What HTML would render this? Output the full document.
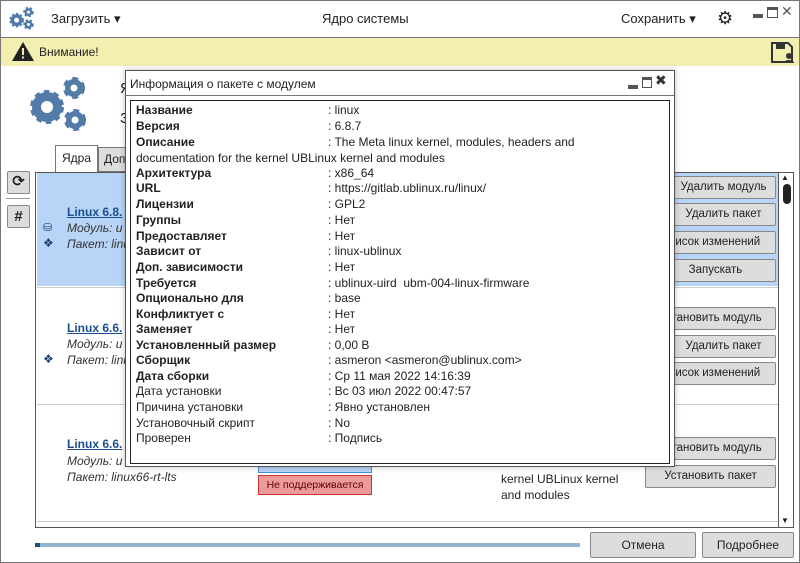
<!DOCTYPE html>
<html><head><meta charset="utf-8"><style>
*{box-sizing:border-box;margin:0;padding:0}
body{width:800px;height:563px;overflow:hidden;background:#fff;font-family:"Liberation Sans","DejaVu Sans",sans-serif;font-size:12px;color:#222;position:relative}
.a{position:absolute}
.btn{position:absolute;background:#ddd;border:1px solid #888;border-radius:2px;text-align:center;font-size:11.5px;line-height:21px;color:#222;overflow:hidden;white-space:nowrap}
.lnk{color:#1a4f8f;font-weight:bold;text-decoration:underline;font-size:12px}
.it{font-style:italic;font-size:12px;color:#333}
.row{position:absolute;left:136px;font-size:12px;line-height:15.6px;white-space:nowrap}
.row b{display:inline-block;width:192px;font-weight:bold}
.row span.n{display:inline-block;width:192px}
</style></head><body>
<div class="a" style="left:0;top:0;width:800px;height:563px;border:1px solid #777"></div>
<!-- top bar -->
<svg class="a" style="left:8px;top:6px" width="28" height="24" viewBox="0 0 26 22"><g fill="#4f79a8" stroke="#4f79a8" stroke-width="2.5" stroke-dasharray="2 1.6"><circle cx="8" cy="13" r="5.5"/><circle cx="19" cy="5.5" r="3.6"/><circle cx="19" cy="17" r="3.6"/></g><g fill="#fff"><circle cx="8" cy="13" r="2.3"/><circle cx="19" cy="5.5" r="1.4"/><circle cx="19" cy="17" r="1.4"/></g></svg>
<div class="a" style="left:51px;top:11px;font-size:13px">Загрузить ▾</div>
<div class="a" style="left:322px;top:11px;font-size:13px">Ядро системы</div>
<div class="a" style="left:621px;top:11px;font-size:13px">Сохранить ▾</div>
<div class="a" style="left:717px;top:8px;font-size:18px;color:#222">⚙</div>
<div class="a" style="left:753px;top:14px;width:10px;height:4px;background:#555"></div>
<div class="a" style="left:767px;top:7px;width:11px;height:11px;border:1px solid #555;border-top:3px solid #555"></div>
<div class="a" style="left:781px;top:3px;font-size:14px;color:#555">✕</div>
<div class="a" style="left:0;top:37px;width:800px;height:1px;background:#777"></div>
<div class="a" style="left:1px;top:38px;width:798px;height:28px;background:#f3efb0"></div>
<svg class="a" style="left:11px;top:41px" width="24" height="21" viewBox="0 0 24 21"><path d="M12 1L23 20H1Z" fill="#222"/><rect x="11" y="7" width="2" height="7" fill="#f3efb0"/><rect x="11" y="15.5" width="2" height="2" fill="#f3efb0"/></svg>
<div class="a" style="left:39px;top:45px;font-size:12px">Внимание!</div>
<svg class="a" style="left:771px;top:42px" width="24" height="22" viewBox="0 0 24 22"><path d="M1 1H17L21 5V20H1Z" fill="none" stroke="#333" stroke-width="2"/><rect x="5" y="2" width="9" height="5" fill="#333"/><circle cx="18" cy="14" r="3" fill="#333"/><path d="M13 21C13 17 23 17 23 21Z" fill="#333"/></svg>
<!-- big gears -->
<svg class="a" style="left:25px;top:74px" width="68" height="62" viewBox="0 0 68 62"><g fill="#527ba8" stroke="#527ba8" stroke-width="6" stroke-dasharray="5 4"><circle cx="22" cy="33" r="14"/><circle cx="49" cy="14" r="8"/><circle cx="50" cy="46" r="8"/></g><g fill="#527ba8"><circle cx="22" cy="33" r="15"/><circle cx="49" cy="14" r="9"/><circle cx="50" cy="46" r="9"/></g><g fill="#fff"><circle cx="22" cy="33" r="6"/><circle cx="49" cy="14" r="3.5"/><circle cx="50" cy="46" r="3.5"/></g></svg>
<div class="a" style="left:120px;top:80px;font-size:15px">Я</div>
<div class="a" style="left:120px;top:110px;font-size:15px">З</div>
<!-- tabs -->
<div class="a" style="left:55px;top:145px;width:43px;height:28px;border:1px solid #777;border-bottom:none;background:#fff;font-size:12px;padding:5px 0 0 6px">Ядра</div>
<div class="a" style="left:98px;top:147px;width:30px;height:25px;border:1px solid #777;background:#ddd;font-size:12px;padding:4px 0 0 5px;overflow:hidden">Доп</div>
<!-- left buttons -->
<div class="btn" style="left:7px;top:171px;width:23px;height:23px;font-size:15px;line-height:20px;font-weight:bold">⟳</div>
<div class="a" style="left:6px;top:198px;width:24px;height:1px;background:#999"></div>
<div class="btn" style="left:7px;top:205px;width:23px;height:23px;font-size:15px;line-height:21px;font-weight:bold">#</div>
<!-- list -->
<div class="a" style="left:35px;top:172px;width:759px;height:356px;border:1px solid #555"></div>
<div class="a" style="left:37px;top:173px;width:741px;height:113px;background:#b8d4f6"></div>
<div class="a" style="left:37px;top:287px;width:741px;height:1px;background:#ccc"></div>
<div class="a" style="left:37px;top:404px;width:741px;height:1px;background:#ccc"></div>
<div class="a" style="left:37px;top:521px;width:741px;height:1px;background:#ccc"></div>
<div class="a" style="left:778px;top:173px;width:1px;height:354px;background:#555"></div>
<div class="a" style="left:781px;top:173px;font-size:8px">▲</div>
<div class="a" style="left:783px;top:184px;width:8px;height:20px;background:#222;border-radius:4px"></div>
<div class="a" style="left:781px;top:516px;font-size:8px">▼</div>
<div class="a lnk" style="left:67px;top:205px">Linux 6.8.</div>
<div class="a it" style="left:67px;top:221px">Модуль: u</div>
<div class="a it" style="left:67px;top:237px">Пакет: linu</div>
<div class="a" style="left:43px;top:221px;font-size:11px;color:#1a3f70">⛁</div>
<div class="a" style="left:43px;top:236px;font-size:12px;color:#1a3f70">❖</div>
<div class="a lnk" style="left:67px;top:321px">Linux 6.6.</div>
<div class="a it" style="left:67px;top:337px">Модуль: u</div>
<div class="a it" style="left:67px;top:353px">Пакет: linu</div>
<div class="a" style="left:43px;top:352px;font-size:12px;color:#1a3f70">❖</div>
<div class="a lnk" style="left:67px;top:437px">Linux 6.6.</div>
<div class="a it" style="left:67px;top:454px">Модуль: u</div>
<div class="a it" style="left:67px;top:470px">Пакет: linux66-rt-lts</div>
<div class="a" style="left:258px;top:466px;width:114px;height:7px;background:#b8d4f6;border:1px solid #4a8fd8;border-top:none"></div>
<div class="a" style="left:258px;top:475px;width:114px;height:20px;background:#ec9a9a;border:1px solid #c33;font-size:10.5px;color:#600;text-align:center;line-height:18px">Не поддерживается</div>
<div class="a" style="left:501px;top:471px;font-size:12px;line-height:16px">kernel UBLinux kernel<br>and modules</div>
<div class="btn" style="left:645px;top:176px;width:131px;height:23px;padding-left:26px">Удалить модуль</div>
<div class="btn" style="left:645px;top:203px;width:131px;height:23px;padding-left:26px">Удалить пакет</div>
<div class="btn" style="left:645px;top:231px;width:131px;height:23px">Список изменений</div>
<div class="btn" style="left:645px;top:259px;width:131px;height:23px;padding-left:10px">Запускать</div>
<div class="btn" style="left:645px;top:307px;width:131px;height:23px">Установить модуль</div>
<div class="btn" style="left:645px;top:335px;width:131px;height:23px;padding-left:26px">Удалить пакет</div>
<div class="btn" style="left:645px;top:362px;width:131px;height:23px">Список изменений</div>
<div class="btn" style="left:645px;top:437px;width:131px;height:23px">Установить модуль</div>
<div class="btn" style="left:645px;top:465px;width:131px;height:23px">Установить пакет</div>
<!-- bottom -->
<div class="a" style="left:35px;top:543px;width:545px;height:4px;background:#93b4d0"></div>
<div class="a" style="left:35px;top:543px;width:5px;height:4px;background:#1a4f8f"></div>
<div class="btn" style="left:590px;top:532px;width:106px;height:26px;font-size:12px;line-height:24px">Отмена</div>
<div class="btn" style="left:702px;top:532px;width:92px;height:26px;font-size:12px;line-height:24px">Подробнее</div>
<!-- dialog -->
<div class="a" style="left:125px;top:70px;width:550px;height:397px;background:#fff;border:1px solid #555;box-shadow:0 0 6px rgba(0,0,0,.25)"></div>
<div class="a" style="left:130px;top:77px;font-size:12px">Информация о пакете с модулем</div>
<div class="a" style="left:628px;top:85px;width:10px;height:4px;background:#555"></div>
<div class="a" style="left:642px;top:77px;width:10px;height:11px;border:1px solid #555;border-top:3px solid #555"></div>
<div class="a" style="left:655px;top:72px;font-size:14px;font-weight:bold;color:#333">✖</div>
<div class="a" style="left:126px;top:95px;width:548px;height:1px;background:#777"></div>
<div class="a" style="left:130px;top:100px;width:540px;height:364px;border:1px solid #222"></div>
<div class="row" style="top:103px"><b>Название</b>: linux</div>
<div class="row" style="top:119px"><b>Версия</b>: 6.8.7</div>
<div class="row" style="top:135px"><b>Описание</b>: The Meta linux kernel, modules, headers and<br>documentation for the kernel UBLinux kernel and modules</div>
<div class="row" style="top:166px"><b>Архитектура</b>: x86_64</div>
<div class="row" style="top:181px"><b>URL</b>: https://gitlab.ublinux.ru/linux/</div>
<div class="row" style="top:197px"><b>Лицензии</b>: GPL2</div>
<div class="row" style="top:213px"><b>Группы</b>: Нет</div>
<div class="row" style="top:229px"><b>Предоставляет</b>: Нет</div>
<div class="row" style="top:244px"><b>Зависит от</b>: linux-ublinux</div>
<div class="row" style="top:260px"><b>Доп. зависимости</b>: Нет</div>
<div class="row" style="top:276px"><b>Требуется</b>: ublinux-uird &nbsp;ubm-004-linux-firmware</div>
<div class="row" style="top:291px"><b>Опционально для</b>: base</div>
<div class="row" style="top:307px"><b>Конфликтует с</b>: Нет</div>
<div class="row" style="top:322px"><b>Заменяет</b>: Нет</div>
<div class="row" style="top:338px"><b>Установленный размер</b>: 0,00 B</div>
<div class="row" style="top:353px"><b>Сборщик</b>: asmeron &lt;asmeron@ublinux.com&gt;</div>
<div class="row" style="top:369px"><b>Дата сборки</b>: Ср 11 мая 2022 14:16:39</div>
<div class="row" style="top:384px"><span class="n">Дата установки</span>: Вс 03 июл 2022 00:47:57</div>
<div class="row" style="top:400px"><span class="n">Причина установки</span>: Явно установлен</div>
<div class="row" style="top:416px"><span class="n">Установочный скрипт</span>: No</div>
<div class="row" style="top:431px"><span class="n">Проверен</span>: Подпись</div>
</body></html>
